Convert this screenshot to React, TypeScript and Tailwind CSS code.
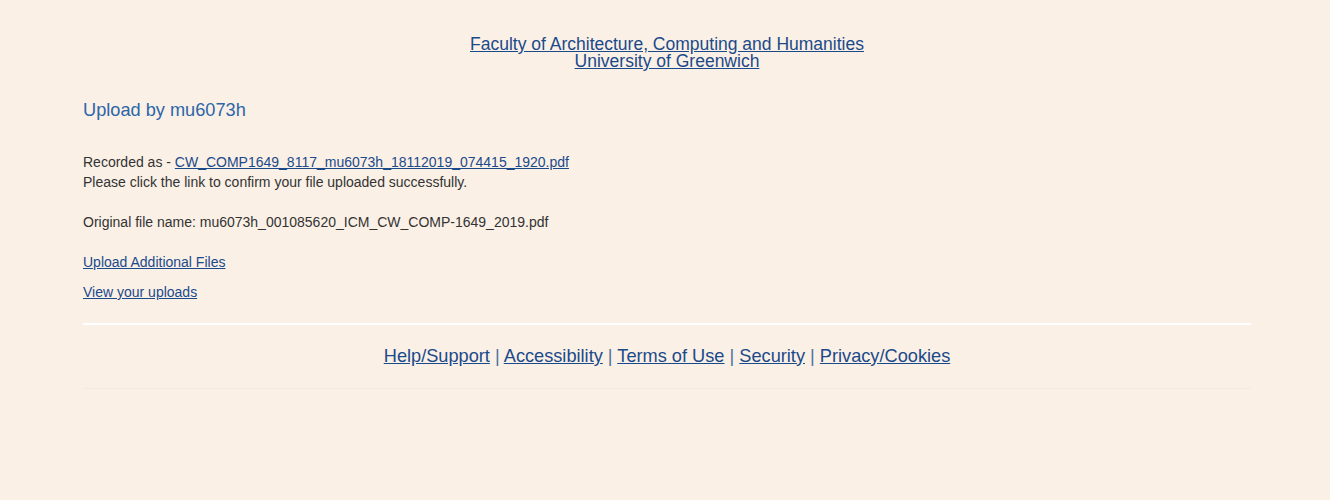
export default function App() {
  const footerLinks = ['Help/Support', 'Accessibility', 'Terms of Use', 'Security', 'Privacy/Cookies'];

  return (
    <div className="min-h-[500px] bg-[#faf0e6] font-['Liberation_Sans',Arial,sans-serif] text-[#333]">
      <div className="mx-auto w-[1172px] pl-[4px]">
        <header className="pt-[36px] text-center text-[17.5px] leading-[17px]">
          <a href="#" className="text-[#1a4a8a] underline">
            Faculty of Architecture, Computing and Humanities
          </a>
          <br />
          <a href="#" className="text-[#1a4a8a] underline">
            University of Greenwich
          </a>
        </header>

        <h1 className="mt-[30px] text-[18.2px] leading-[20px] text-[#2c66a8]">Upload by mu6073h</h1>

        <div className="mt-[32px] text-[14px] leading-[20px]">
          <p>
            Recorded as -{' '}
            <a href="#" className="text-[#1a4a8a] underline">
              CW_COMP1649_8117_mu6073h_18112019_074415_1920.pdf
            </a>
          </p>
          <p>Please click the link to confirm your file uploaded successfully.</p>
          <br />
          <p>Original file name: mu6073h_001085620_ICM_CW_COMP-1649_2019.pdf</p>
          <br />
          <p>
            <a href="#" className="text-[#1a4a8a] underline">
              Upload Additional Files
            </a>
          </p>
          <p className="mt-[10px]">
            <a href="#" className="text-[#1a4a8a] underline">
              View your uploads
            </a>
          </p>
        </div>
      </div>

      <div className="mx-auto mt-[21px] w-[1172px] pl-[4px]">
        <div className="h-[2px] bg-white" />
        <div className="flex h-[63px] items-center justify-center text-[18.2px] text-[#4a72a0]">
          {footerLinks.map((label, i) => (
            <span key={label} className="whitespace-pre">
              {i > 0 && ' | '}
              <a href="#" className="text-[#1a4a8a] underline">
                {label}
              </a>
            </span>
          ))}
        </div>
        <div className="h-px bg-[#f1ebe4]" />
      </div>
    </div>
  );
}
